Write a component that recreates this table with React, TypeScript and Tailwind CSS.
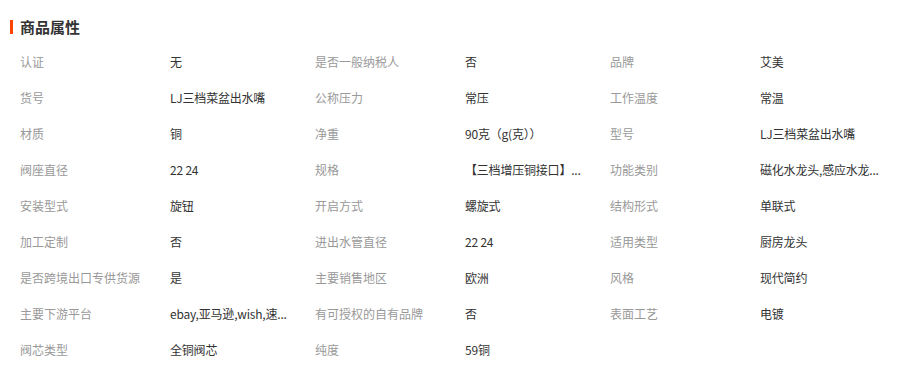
const rows: [string, string][][] = [
	[["认证", "无"], ["是否一般纳税人", "否"], ["品牌", "艾美"]],
	[["货号", "LJ三档菜盆出水嘴"], ["公称压力", "常压"], ["工作温度", "常温"]],
	[["材质", "铜"], ["净重", "90克（g(克））"], ["型号", "LJ三档菜盆出水嘴"]],
	[["阀座直径", "22 24"], ["规格", "【三档增压铜接口】..."], ["功能类别", "磁化水龙头,感应水龙..."]],
	[["安装型式", "旋钮"], ["开启方式", "螺旋式"], ["结构形式", "单联式"]],
	[["加工定制", "否"], ["进出水管直径", "22 24"], ["适用类型", "厨房龙头"]],
	[["是否跨境出口专供货源", "是"], ["主要销售地区", "欧洲"], ["风格", "现代简约"]],
	[["主要下游平台", "ebay,亚马逊,wish,速..."], ["有可授权的自有品牌", "否"], ["表面工艺", "电镀"]],
	[["阀芯类型", "全铜阀芯"], ["纯度", "59铜"]],
];

export default function App() {
	return (
		<div
			className="w-[900px] h-[366px] bg-white pl-[10px] overflow-hidden"
			style={{ fontFamily: '"Microsoft YaHei", "Noto Sans CJK SC", sans-serif' }}
		>
			<div className="h-[44px] flex items-center pt-[10px]">
				<span className="w-[3px] h-[14px] bg-[#ff4400]" />
				<h2 className="ml-[7px] text-[15px] font-bold text-[#333]">商品属性</h2>
			</div>
			<div className="flex flex-col">
				{rows.map((row, i) => (
					<div key={i} className="flex h-[36px] items-center text-[12px]">
						{row.map(([label, value]) => (
							<div key={label} className="flex w-[295px] pl-[10px]">
								<span className="w-[150px] shrink-0 text-[#999] whitespace-nowrap">{label}</span>
								<span className="text-[#333] whitespace-nowrap tracking-[-0.2px]">{value}</span>
							</div>
						))}
					</div>
				))}
			</div>
		</div>
	);
}
